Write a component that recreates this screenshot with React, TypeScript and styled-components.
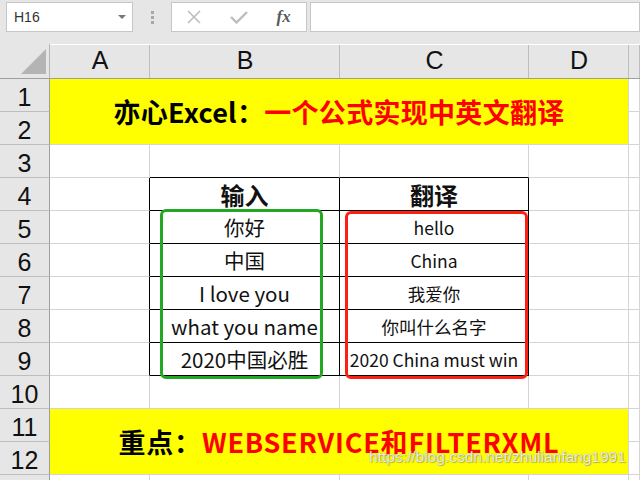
import React from "react";
import styled, { createGlobalStyle } from "styled-components";

const GlobalStyle = createGlobalStyle`
  html, body {
    margin: 0;
    padding: 0;
    width: 640px;
    height: 480px;
    overflow: hidden;
    background: #e6e6e6;
  }
`;

const Page = styled.div`
  position: relative;
  width: 640px;
  height: 480px;
  overflow: hidden;
  background: #e6e6e6;
  font-family: "Noto Sans CJK SC", "Noto Sans", sans-serif;
`;

const Toolbar = styled.div`
  display: flex;
  align-items: flex-start;
  height: 44px;
  padding: 2px 0 0 6px;
  box-sizing: border-box;
`;

const Box = styled.div<{ $w?: number }>`
  display: flex;
  align-items: center;
  height: 30px;
  box-sizing: border-box;
  background: #ffffff;
  border: 1px solid #c6c6c6;
  width: ${(p) => (p.$w ? `${p.$w}px` : "auto")};
  flex: ${(p) => (p.$w ? "none" : "1")};
`;

const NameText = styled.span`
  flex: 1;
  padding-left: 7px;
  font-family: "Liberation Sans", Arial, sans-serif;
  font-size: 14px;
  color: #333;
`;

const Caret = styled.span`
  width: 0;
  height: 0;
  margin-right: 6px;
  border-left: 4px solid transparent;
  border-right: 4px solid transparent;
  border-top: 4px solid #777;
`;

const Dots = styled.div`
  display: flex;
  flex-direction: column;
  gap: 2px;
  width: 38px;
  align-items: center;
  padding-top: 9px;

  span {
    width: 3px;
    height: 3px;
    background: #a8a8a8;
  }
`;

const IconSlot = styled.div`
  flex: 1;
  display: flex;
  justify-content: center;
  align-items: center;
`;

const Fx = styled.span`
  font-family: "Liberation Serif", "Times New Roman", serif;
  font-style: italic;
  font-weight: bold;
  font-size: 17px;
  color: #5a5a5a;
`;

const Gap = styled.div`
  width: 3px;
`;

const Sheet = styled.div`
  position: relative;
  display: grid;
  grid-template-columns: 50px 100px 190px 189px 100px 1fr;
  grid-template-rows: 35px repeat(12, 33px) 1fr;
  height: 436px;
  background: #ffffff;
`;

const Corner = styled.div`
  position: relative;
  background: #e6e6e6;
  border-right: 1px solid #b5b5b5;
  border-bottom: 1px solid #9e9e9e;

  &::after {
    content: "";
    position: absolute;
    right: 3px;
    bottom: 4px;
    width: 0;
    height: 0;
    border-left: 25px solid transparent;
    border-bottom: 25px solid #b4b4b4;
  }
`;

const ColHead = styled.div`
  display: flex;
  align-items: flex-end;
  justify-content: center;
  padding-bottom: 3px;
  background: #e6e6e6;
  border-bottom: 1px solid #9e9e9e;
  box-shadow: inset -1px 0 0 #bdbdbd;
  clip-path: inset(1px 0 0 0);
  font-family: "Liberation Sans", Arial, sans-serif;
  font-size: 25px;
  color: #111;
`;

const RowHead = styled.div`
  display: flex;
  align-items: center;
  justify-content: center;
  padding-top: 5px;
  box-sizing: border-box;
  background: #e6e6e6;
  border-right: 1px solid #9e9e9e;
  border-bottom: 1px solid #bdbdbd;
  font-family: "Liberation Sans", Arial, sans-serif;
  font-size: 25px;
  color: #111;
`;

const Cell = styled.div<{ $right?: boolean; $bottom?: boolean; $size?: number; $bold?: boolean }>`
  display: flex;
  align-items: center;
  justify-content: center;
  box-sizing: border-box;
  border-right: 1px solid ${(p) => (p.$right ? "#000" : "#d4d4d4")};
  border-bottom: 1px solid ${(p) => (p.$bottom ? "#000" : "#d4d4d4")};
  font-size: ${(p) => p.$size ?? 18}px;
  font-weight: ${(p) => (p.$bold ? 700 : 400)};
  color: #111;
  white-space: nowrap;
`;

const Banner = styled.div<{ $row: number; $spacing: number }>`
  grid-column: 2 / span 4;
  grid-row: ${(p) => p.$row + 1} / span 2;
  display: flex;
  align-items: center;
  justify-content: center;
  background: #ffff00;
  border-right: 1px solid #d4d4d4;
  border-bottom: 1px solid #d4d4d4;
  font-size: 27px;
  font-weight: 700;
  color: #000;
  letter-spacing: ${(p) => p.$spacing}px;
  white-space: nowrap;
`;

const Red = styled.span`
  color: #ff0000;
`;

const Frame = styled.div<{ $color: string; $left: number; $top: number; $w: number; $h: number }>`
  position: absolute;
  left: ${(p) => p.$left}px;
  top: ${(p) => p.$top}px;
  width: ${(p) => p.$w}px;
  height: ${(p) => p.$h}px;
  box-sizing: border-box;
  border: 3px solid ${(p) => p.$color};
  border-radius: 6px;
  pointer-events: none;
`;

const Watermark = styled.div`
  position: absolute;
  left: 369px;
  top: 448px;
  font-family: "Liberation Sans", Arial, sans-serif;
  font-size: 15.5px;
  color: rgba(255, 255, 255, 0.85);
  text-shadow: 0 0 1px rgba(90, 90, 90, 0.7), 1px 1px 1px rgba(120, 120, 120, 0.5);
  white-space: nowrap;
`;

// E is only a sliver at the right edge, its letter falls off-screen
const COLS = ["A", "B", "C", "D", ""];

const tableData: Record<number, [string, string]> = {
  4: ["输入", "翻译"],
  5: ["你好", "hello"],
  6: ["中国", "China"],
  7: ["I love you", "我爱你"],
  8: ["what you name", "你叫什么名字"],
  9: ["2020中国必胜", "2020 China must win"],
};

const inBanner = (r: number) => r === 1 || r === 2 || r === 11 || r === 12;

const App: React.FC = () => {
  const rows = Array.from({ length: 13 }, (_, i) => i + 1);

  return (
    <Page>
      <GlobalStyle />
      <Toolbar>
        <Box $w={127}>
          <NameText>H16</NameText>
          <Caret />
        </Box>
        <Dots>
          <span />
          <span />
          <span />
        </Dots>
        <Box $w={136}>
          <IconSlot>
            <svg width="14" height="14" viewBox="0 0 14 14">
              <path d="M1 1 L13 13 M13 1 L1 13" stroke="#bdbdbd" strokeWidth="1.6" fill="none" />
            </svg>
          </IconSlot>
          <IconSlot>
            <svg width="18" height="14" viewBox="0 0 18 14">
              <path d="M1 7 L6.5 12.5 L17 2" stroke="#bdbdbd" strokeWidth="2.4" fill="none" />
            </svg>
          </IconSlot>
          <IconSlot>
            <Fx>fx</Fx>
          </IconSlot>
        </Box>
        <Gap />
        <Box />
      </Toolbar>

      <Sheet>
        <Corner />
        {COLS.map((c, i) => (
          <ColHead key={i}>{c}</ColHead>
        ))}
        {rows.map((r) => (
          <React.Fragment key={r}>
            <RowHead>{r < 13 ? r : ""}</RowHead>
            {r === 1 && (
              <Banner $row={1} $spacing={0.3}>
                亦心Excel：<Red>一个公式实现中英文翻译</Red>
              </Banner>
            )}
            {r === 11 && (
              <Banner $row={11} $spacing={0.8}>
                重点：<Red>WEBSERVICE和FILTERXML</Red>
              </Banner>
            )}
            {COLS.map((c, ci) => {
              if (inBanner(r) && ci < 4) return null;
              const inTable = r >= 4 && r <= 9;
              const right = inTable && ci <= 2;
              const bottom = r >= 3 && r <= 9 && (ci === 1 || ci === 2);
              let text = "";
              let size = 18;
              let bold = false;
              if (inTable && (ci === 1 || ci === 2)) {
                text = tableData[r][ci - 1];
                if (r === 4) {
                  size = 24;
                  bold = true;
                } else {
                  size = ci === 1 ? 20.5 : 17.5;
                }
              }
              return (
                <Cell key={ci} $right={right} $bottom={bottom} $size={size} $bold={bold}>
                  {text}
                </Cell>
              );
            })}
          </React.Fragment>
        ))}
        <Frame $color="#23a823" $left={160} $top={165} $w={163} $h={170} />
        <Frame $color="#ff1e12" $left={345} $top={167} $w={183} $h={168} />
      </Sheet>
      <Watermark>https://blog.csdn.net/zhulianfang1991</Watermark>
    </Page>
  );
};

export default App;
